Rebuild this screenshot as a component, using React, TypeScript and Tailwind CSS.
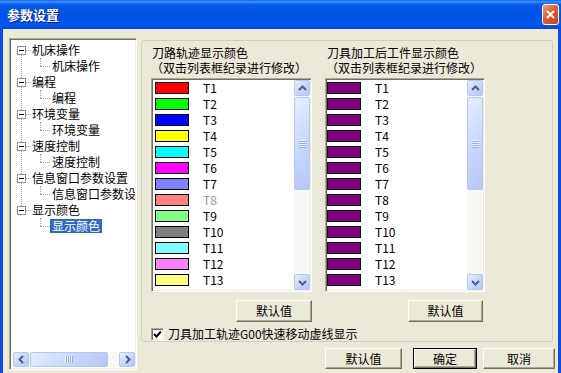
import React from 'react';

const leftColors = [
    '#FF0000', '#00FF00', '#0000FF', '#FFFF00', '#00FFFF', '#FF00FF', '#8080FF',
    '#FF8080', '#80FF80', '#808080', '#80FFFF', '#FF80FF', '#FFFF80', '#80FFFF',
];
const rightColors = leftColors.map(() => '#800080');

const tree = [
    { name: '机床操作', child: '机床操作' },
    { name: '编程', child: '编程' },
    { name: '环境变量', child: '环境变量' },
    { name: '速度控制', child: '速度控制' },
    { name: '信息窗口参数设置', child: '信息窗口参数设置' },
    { name: '显示颜色', child: '显示颜色', selected: true },
];

const sunken =
    'border border-t-[#ACA899] border-l-[#ACA899] border-b-white border-r-white shadow-[inset_1px_1px_0_#716F64,inset_-1px_-1px_0_#F1EFE2] p-px';
const raised =
    'flex items-center justify-center leading-[14px] bg-[#ECE9D8] border border-t-white border-l-white border-b-[#716F64] border-r-[#716F64] shadow-[inset_-1px_-1px_0_#ACA899]';
const xpBtn =
    'flex items-center justify-center rounded-[2px] border border-[#B4C8F5] bg-[linear-gradient(135deg,#E6EEFE,#C6D6FD_55%,#B5C8F6)]';

const Chevron = ({ dir }: { dir: 'up' | 'down' | 'left' | 'right' }) => {
    const d = {
        up: 'M2 7 L5.5 3.5 L9 7',
        down: 'M2 4 L5.5 7.5 L9 4',
        left: 'M7 2 L3.5 5.5 L7 9',
        right: 'M4 2 L7.5 5.5 L4 9',
    }[dir];
    return (
        <svg width="11" height="11" viewBox="0 0 11 11">
            <path d={d} fill="none" stroke="#4D6185" strokeWidth="2" />
        </svg>
    );
};

const VScroll = () => (
    <div className="flex w-[16px] shrink-0 flex-col bg-[#F8F8F4]">
        <div className={`${xpBtn} h-[16px]`}>
            <Chevron dir="up" />
        </div>
        <div className={`${xpBtn} mt-px h-[93px] flex-col`}>
            {[0, 1, 2, 3].map((i) => (
                <div key={i} className="flex flex-col">
                    <div className="h-px w-[7px] bg-[#EEF4FE]" />
                    <div className="h-px w-[7px] bg-[#8CB0F8]" />
                </div>
            ))}
        </div>
        <div className="flex-1" />
        <div className={`${xpBtn} h-[16px]`}>
            <Chevron dir="down" />
        </div>
    </div>
);

const HScroll = () => (
    <div className="mb-px ml-[2px] flex h-[15px] bg-[#F8F8F4]">
        <div className={`${xpBtn} w-[16px]`}>
            <Chevron dir="left" />
        </div>
        <div className={`${xpBtn} mx-px w-[78px]`}>
            {[0, 1, 2, 3].map((i) => (
                <div key={i} className="flex">
                    <div className="h-[7px] w-px bg-[#EEF4FE]" />
                    <div className="h-[7px] w-px bg-[#8CB0F8]" />
                </div>
            ))}
        </div>
        <div className="flex-1" />
        <div className={`${xpBtn} w-[16px]`}>
            <Chevron dir="right" />
        </div>
    </div>
);

const ColorList = ({ colors, swatchClass, widthClass }: { colors: string[]; swatchClass: string; widthClass: string }) => (
    <div className={`${sunken} flex h-[214px] ${widthClass} bg-white`}>
        <div className="flex-1 overflow-hidden bg-white">
            {colors.map((c, i) => (
                <div key={i} className="flex h-[16px] items-center">
                    <div className={`h-[12px] w-[34px] shrink-0 border border-black ${swatchClass}`} style={{ backgroundColor: c }} />
                    <span className={`ml-[14px] leading-[14px] ${i === 7 && swatchClass === 'ml-[2px]' ? 'text-[#9C9C9C]' : ''}`}>
                        T{i + 1}
                    </span>
                </div>
            ))}
        </div>
        <VScroll />
    </div>
);

const TreePanel = () => (
    <div className={`${sunken} mt-[9px] flex h-[332px] w-[128px] shrink-0 flex-col bg-white`}>
        <div className="relative overflow-hidden pt-[2px] whitespace-nowrap">
            {/* root line */}
            <div className="absolute left-[10px] top-[10px] h-[160px] border-l border-dotted border-[#A0A0A0]" />
            {tree.map((node) => (
                <React.Fragment key={node.name}>
                    <div className="relative flex h-[16px] items-center">
                        <div className="ml-[6px] flex h-[9px] w-[9px] shrink-0 items-center justify-center border border-[#8E8F8F] bg-white">
                            <div className="h-px w-[5px] bg-black" />
                        </div>
                        <div className="w-[5px] shrink-0 border-t border-dotted border-[#A0A0A0]" />
                        <span className="ml-px leading-[14px]">{node.name}</span>
                    </div>
                    <div className="flex h-[16px] items-center">
                        <div className="ml-[29px] flex h-full w-[10px] shrink-0 flex-col">
                            <div className="h-[8px] border-l border-dotted border-[#A0A0A0]" />
                            <div className="border-t border-dotted border-[#A0A0A0]" />
                        </div>
                        <span
                            className={`shrink-0 px-[2px] leading-[14px] ${node.selected ? 'bg-[#316AC5] text-white' : ''}`}
                        >
                            {node.child}
                        </span>
                    </div>
                </React.Fragment>
            ))}
        </div>
        <div className="mt-auto">
            <HScroll />
        </div>
    </div>
);

export default function App() {
    return (
        <div className="flex h-[373px] w-[561px] flex-col overflow-hidden bg-[#ECE9D8] font-['Noto_Sans_CJK_SC',sans-serif] text-[12px] text-black">
            {/* title bar */}
            <div className="flex h-[29px] shrink-0 items-center justify-between bg-[linear-gradient(to_bottom,#0A63F0,#3C8EFF_6%,#0559E8_16%,#0053E4_50%,#0058EE_85%,#0347D0)] pl-[7px] pr-[2px]">
                <span className="text-[13px] leading-[16px] font-bold text-white [text-shadow:1px_1px_0_#0A1883]">参数设置</span>
                <div className="flex h-[21px] w-[17px] items-center justify-center rounded-[3px] border border-white bg-[linear-gradient(135deg,#F09A7C,#E0582E_50%,#C8401A)]">
                    <svg width="11" height="11" viewBox="0 0 11 11">
                        <path d="M2 2 L9 9 M9 2 L2 9" stroke="white" strokeWidth="2" />
                    </svg>
                </div>
            </div>

            {/* body */}
            <div className="flex flex-1 border-x-[3px] border-[#0B4BE2] pl-[6px]">
                <TreePanel />

                <div className="ml-[4px] flex w-[414px] flex-col">
                    <div className="mt-[11px] flex h-[302px] w-[412px] flex-col rounded-[3px] border border-[#D0D0BF] pl-[9px] pt-[4px]">
                        <div className="flex gap-[13px]">
                            <div className="flex w-[161px] flex-col">
                                <div className="h-[15px] pl-px leading-[15px]">刀路轨迹显示颜色</div>
                                <div className="h-[15px] whitespace-nowrap leading-[15px]">（双击列表框纪录进行修改）</div>
                                <div className="mt-[3px]">
                                    <ColorList colors={leftColors} swatchClass="ml-[2px]" widthClass="w-[161px]" />
                                </div>
                                <div className="mt-[8px] flex justify-end">
                                    <div className={`${raised} h-[22px] w-[76px]`}>默认值</div>
                                </div>
                            </div>
                            <div className="flex w-[160px] flex-col">
                                <div className="h-[15px] pl-[2px] leading-[15px]">刀具加工后工件显示颜色</div>
                                <div className="h-[15px] whitespace-nowrap pl-px leading-[15px]">（双击列表框纪录进行修改）</div>
                                <div className="mt-[3px]">
                                    <ColorList colors={rightColors} swatchClass="ml-0" widthClass="w-[160px]" />
                                </div>
                                <div className="mt-[8px] flex justify-end pr-[2px]">
                                    <div className={`${raised} h-[22px] w-[75px]`}>默认值</div>
                                </div>
                            </div>
                        </div>
                        <div className="mt-[5px] flex items-center">
                            <div className={`${sunken} flex h-[13px] w-[13px] items-center justify-center bg-white !p-0`}>
                                <svg width="9" height="9" viewBox="0 0 9 9">
                                    <path d="M1 4 L3.5 6.5 L8 1.5" fill="none" stroke="black" strokeWidth="2" />
                                </svg>
                            </div>
                            <span className="ml-[4px] leading-[14px]">刀具加工轨迹G00快速移动虚线显示</span>
                        </div>
                    </div>

                    <div className="mt-[6px] flex justify-end">
                        <div className={`${raised} h-[21px] w-[77px]`}>默认值</div>
                        <div className="ml-[11px] flex h-[21px] w-[64px] border border-black">
                            <div className={`${raised} flex-1`}>确定</div>
                        </div>
                        <div className={`${raised} ml-[6px] h-[21px] w-[72px]`}>取消</div>
                    </div>
                </div>
            </div>
        </div>
    );
}
